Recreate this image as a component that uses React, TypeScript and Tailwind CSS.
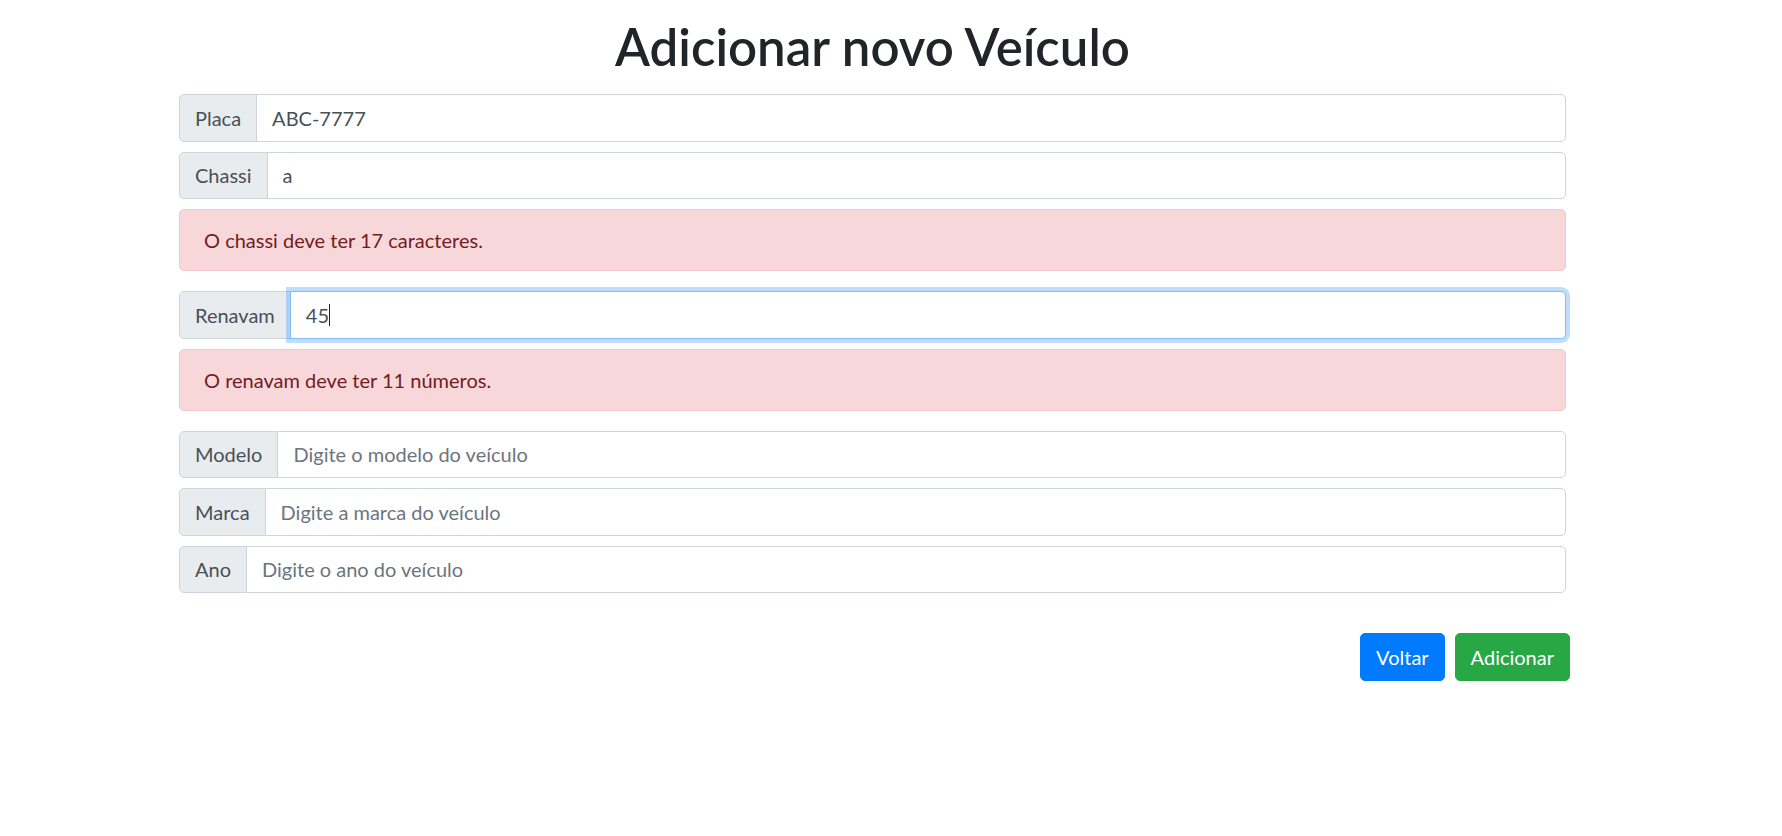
import { useState } from "react"

const FONT = "font-['Lato','Open_Sans','Liberation_Sans',sans-serif]"

function Field({ label, value, placeholder }: { label: string; value?: string; placeholder: string }) {
  const [v, setV] = useState(value ?? "")
  return (
    <div className="flex h-[47.5px] mb-[10px]">
      <span className="flex items-center px-[15px] bg-[#e9ecef] border border-[#ced4da] rounded-l-[5px] text-[20px] text-[#495057]">{label}</span>
      <input
        value={v}
        onChange={e => setV(e.target.value)}
        placeholder={placeholder}
        className="flex-1 -ml-px px-[15px] bg-white border border-[#ced4da] rounded-r-[5px] text-[20px] text-[#495057] placeholder:text-[#6c757d] outline-none"
      />
    </div>
  )
}

function Alert({ children }: { children: string }) {
  return (
    <div className="mb-[20px] px-[24px] py-[15px] bg-[#f8d7da] border border-[#f5c6cb] rounded-[5px] text-[20px] leading-[30px] text-[#721c24]">{children}</div>
  )
}

export default function App() {
  return (
    <div className={`min-h-screen bg-white ${FONT} text-[#212529]`}>
      <div className="w-[1387px] ml-[179px] pt-[17px]">
        <h1 className="text-center text-[51px] font-semibold leading-[60px] mb-[17px] text-[#212529]">Adicionar novo Veículo</h1>

        <Field label="Placa" value="ABC-7777" placeholder="Digite a placa do veículo" />
        <Field label="Chassi" value="a" placeholder="Digite o chassi do veículo" />
        <Alert>O chassi deve ter 17 caracteres.</Alert>

        {/* focused field */}
        <div className="flex h-[47.5px] mb-[10px]">
          <span className="flex items-center px-[15px] bg-[#e9ecef] border border-[#ced4da] rounded-l-[5px] text-[20px] text-[#495057]">Renavam</span>
          <div className="relative z-10 flex-1 -ml-px flex items-center px-[15px] bg-white border border-[#80bdff] rounded-r-[5px] shadow-[0_0_0_4px_rgba(0,123,255,0.25)] text-[20px] text-[#495057]">
            45<span className="inline-block w-px h-[22px] bg-[#212529]" />
          </div>
        </div>
        <Alert>O renavam deve ter 11 números.</Alert>

        <Field label="Modelo" placeholder="Digite o modelo do veículo" />
        <Field label="Marca" placeholder="Digite a marca do veículo" />
        <Field label="Ano" placeholder="Digite o ano do veículo" />

        <div className="flex justify-end gap-[10px] -mr-[4px] mt-[40px]">
          <button className="h-[47.5px] px-[15px] bg-[#007bff] border border-[#007bff] rounded-[5px] text-[20px] text-white">Voltar</button>
          <button className="h-[47.5px] px-[15px] bg-[#28a745] border border-[#28a745] rounded-[5px] text-[20px] text-white">Adicionar</button>
        </div>
      </div>
    </div>
  )
}
